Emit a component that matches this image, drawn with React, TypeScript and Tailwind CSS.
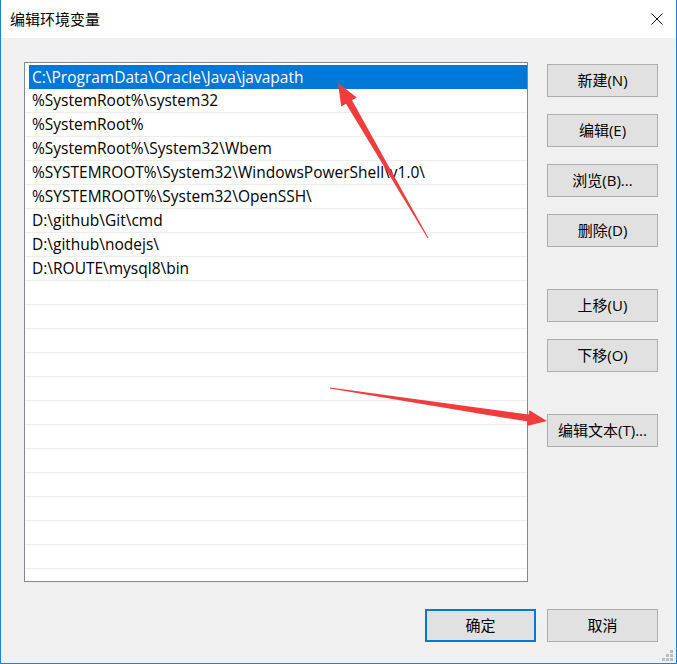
import React from "react";

const items = [
  "C:\\ProgramData\\Oracle\\Java\\javapath",
  "%SystemRoot%\\system32",
  "%SystemRoot%",
  "%SystemRoot%\\System32\\Wbem",
  "%SYSTEMROOT%\\System32\\WindowsPowerShell\\v1.0\\",
  "%SYSTEMROOT%\\System32\\OpenSSH\\",
  "D:\\github\\Git\\cmd",
  "D:\\github\\nodejs\\",
  "D:\\ROUTE\\mysql8\\bin",
];

const rows = Array.from({ length: 22 }, (_, i) => items[i] ?? "");

function Btn({ label, className = "" }: { label: string; className?: string }) {
  return (
    <div
      className={
        "w-[111px] h-[33px] shrink-0 flex items-center justify-center bg-[#e1e1e1] border border-[#adadad] text-[15px] text-black leading-none " +
        className
      }
    >
      {label}
    </div>
  );
}

export default function App() {
  return (
    <div
      className="relative w-[677px] h-[664px] flex flex-col bg-[#f0f0f0] border-l border-r border-b border-[#1883d7] overflow-hidden"
      style={{ fontFamily: '"Open Sans","Noto Sans CJK SC",sans-serif' }}
    >
      <div className="h-[38px] shrink-0 bg-white flex items-center justify-between pl-[9px] pr-[13px]">
        <span
          className="text-[15px] text-black"
          style={{ fontFamily: '"Noto Sans CJK SC",sans-serif' }}
        >
          编辑环境变量
        </span>
        <svg width="12" height="12" viewBox="0 0 12 12">
          <path d="M0.5 0.5 L11.5 11.5 M11.5 0.5 L0.5 11.5" stroke="#111" strokeWidth="1" />
        </svg>
      </div>

      <div className="flex pl-[23px] pt-[24px] gap-[19px]">
        <div className="w-[504px] h-[520px] shrink-0 border border-[#828790] bg-white pt-[2px] overflow-hidden">
          {rows.map((t, i) => (
            <div key={i} className="h-[24px] border-b border-[#ededed] flex">
              {i === 0 ? (
                <div className="ml-[4px] flex-1 h-[24px] bg-[#0078d7] text-white text-[15.5px] flex items-center pl-[3px] pt-[1px] whitespace-nowrap">
                  {t}
                </div>
              ) : (
                <div className="ml-[4px] flex-1 text-black text-[15.5px] flex items-center pl-[3px] pt-[1px] whitespace-nowrap">
                  {t}
                </div>
              )}
            </div>
          ))}
        </div>

        <div className="flex flex-col w-[111px] pt-[2px]">
          <Btn label="新建(N)" />
          <Btn label="编辑(E)" className="mt-[17px]" />
          <Btn label="浏览(B)..." className="mt-[17px]" />
          <Btn label="删除(D)" className="mt-[17px]" />
          <Btn label="上移(U)" className="mt-[42px]" />
          <Btn label="下移(O)" className="mt-[17px]" />
          <Btn label="编辑文本(T)..." className="mt-[42px]" />
        </div>
      </div>

      <div className="flex justify-end gap-[11px] pr-[18px] mt-[27px]">
        <div className="w-[111px] h-[33px] flex items-center justify-center bg-[#e1e1e1] border-2 border-[#0078d7] text-[15px] text-black">
          确定
        </div>
        <Btn label="取消" />
      </div>

      <svg
        className="absolute left-[-1px] top-0 pointer-events-none"
        width="677"
        height="664"
        viewBox="0 0 677 664"
      >
        <polygon
          fill="#f03c3c"
          points="338,83 356.8,97.5 352,100.2 428.4,237.8 427.6,238.2 346,103.8 341.2,106.5"
        />
        <polygon
          fill="#f03c3c"
          points="547,421 529.4,410.2 528.7,414.6 330.1,387.4 329.9,388.6 527.7,421.6 527,426"
        />
        <g fill="#bdbdbd">
          <rect x="670" y="650" width="3" height="3" />
          <rect x="666" y="654" width="3" height="3" />
          <rect x="670" y="654" width="3" height="3" />
          <rect x="662" y="658" width="3" height="3" />
          <rect x="666" y="658" width="3" height="3" />
          <rect x="670" y="658" width="3" height="3" />
        </g>
      </svg>
    </div>
  );
}
